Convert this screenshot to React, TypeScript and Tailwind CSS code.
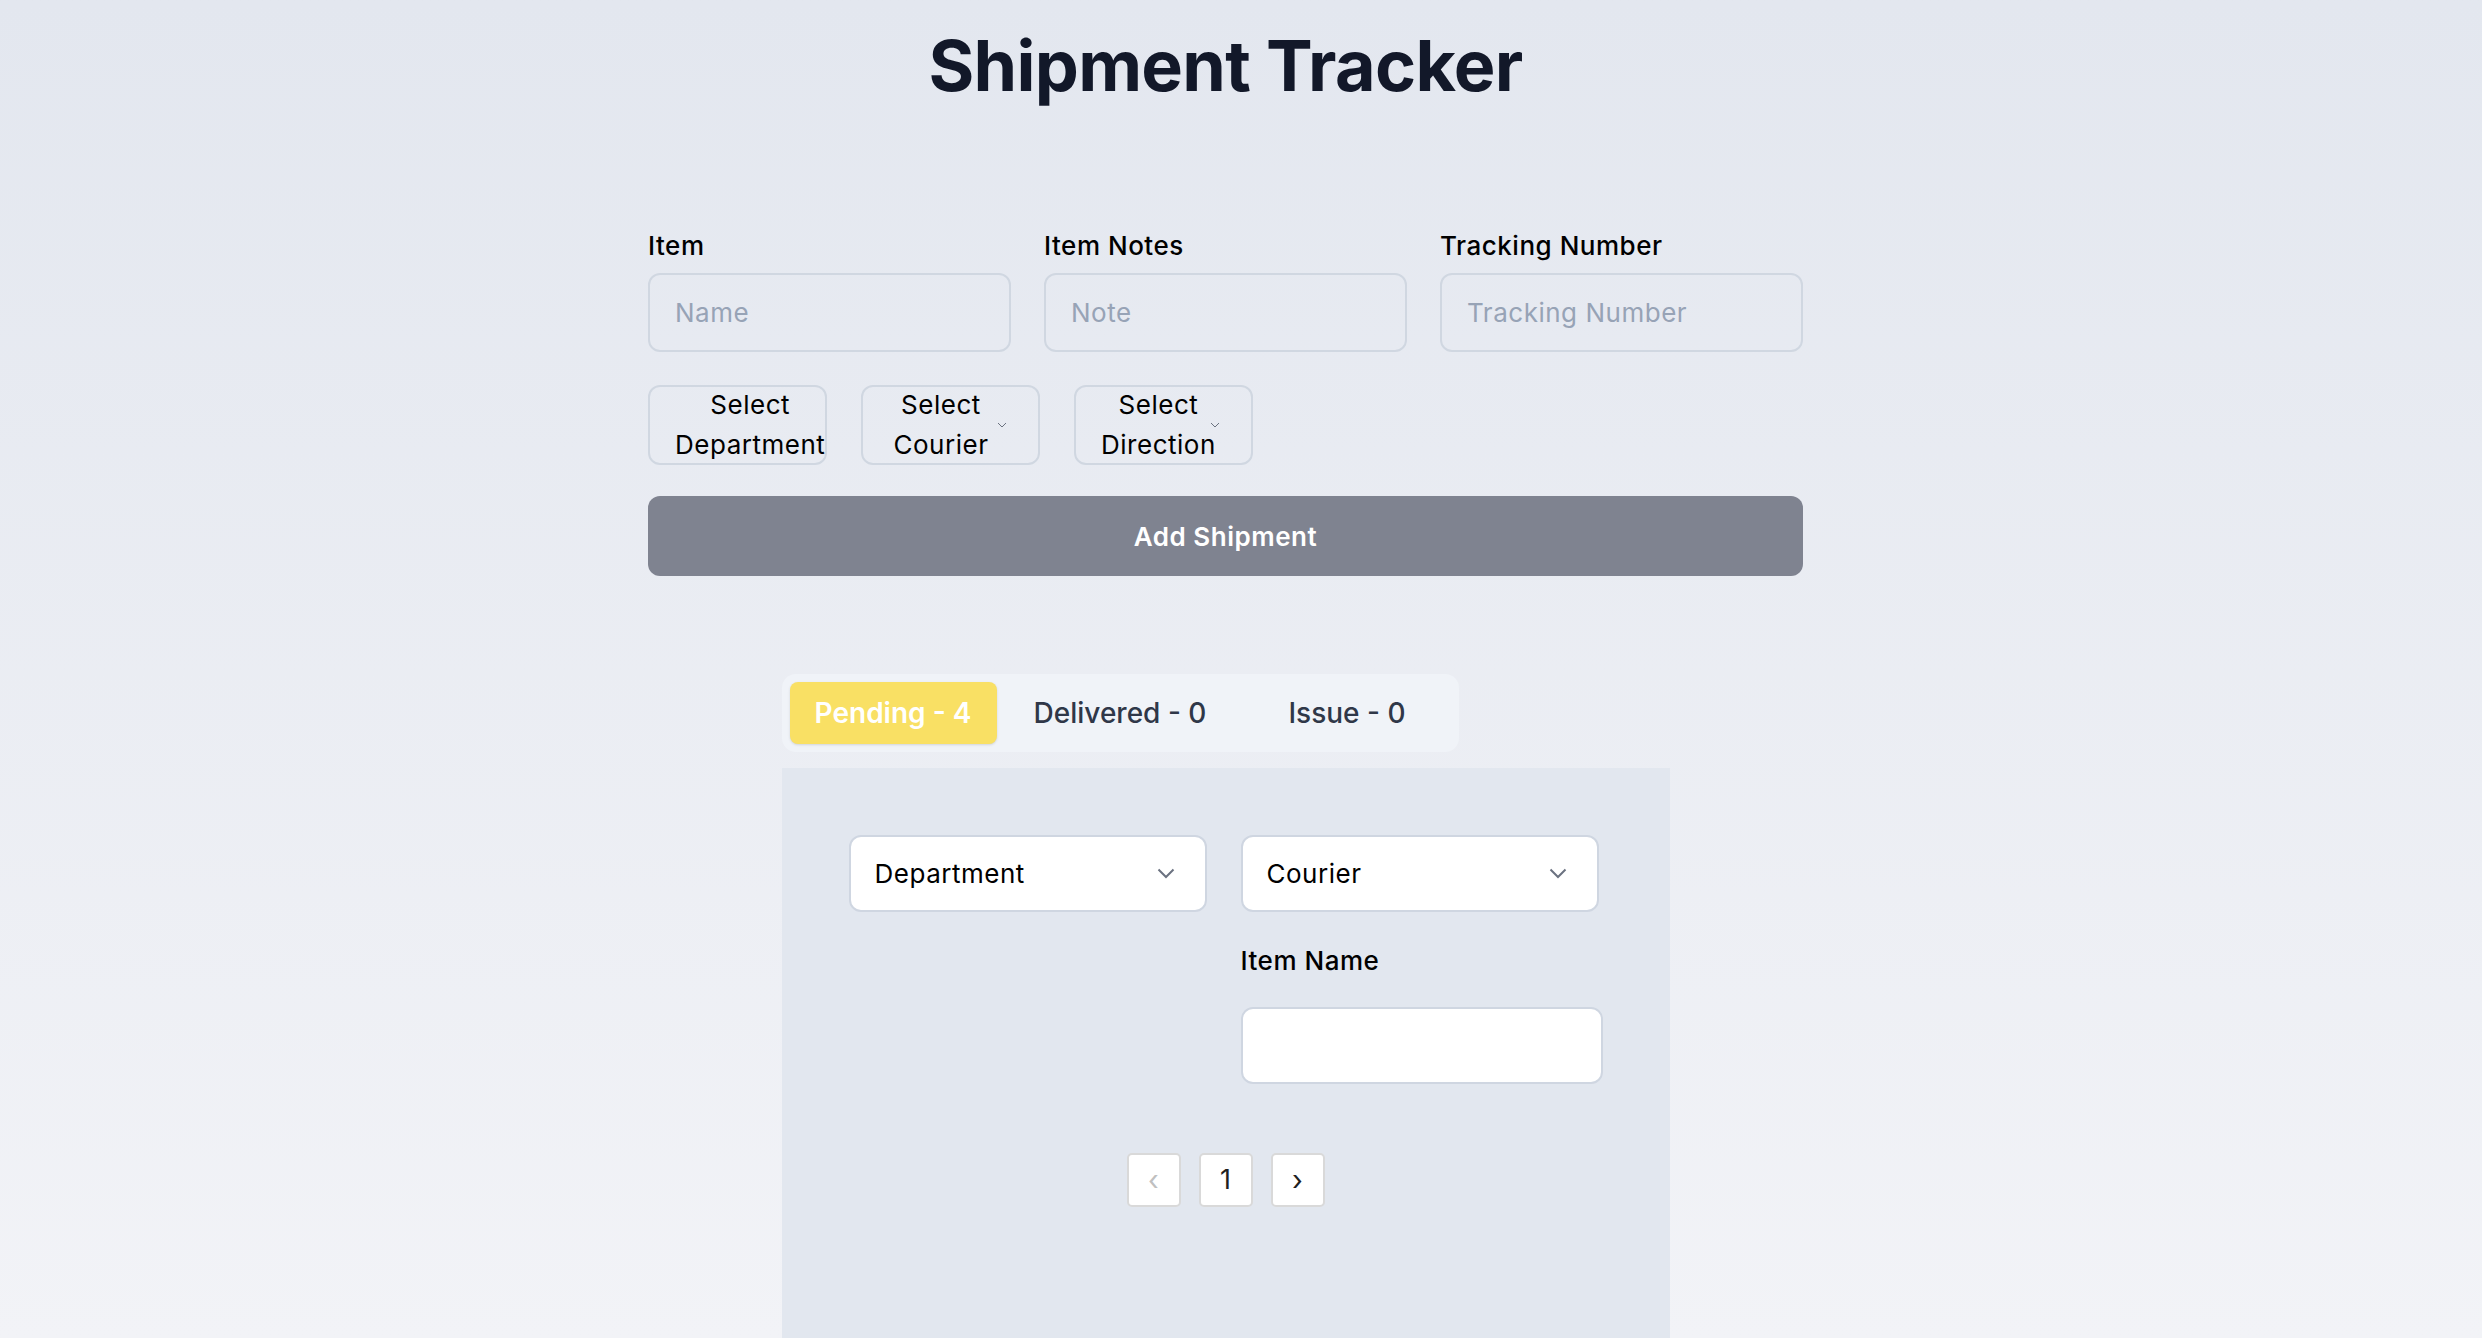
import { useState } from 'react';

const tabs = [
  { key: 'pending', label: 'Pending', count: 4 },
  { key: 'delivered', label: 'Delivered', count: 0 },
  { key: 'issue', label: 'Issue', count: 0 },
];

function TinyChevron() {
  return (
    <svg width="10" height="6" viewBox="0 0 10 6" fill="none" className="absolute right-[31px] top-1/2 -translate-y-1/2">
      <path d="M1 1l4 4 4-4" stroke="#6b7280" strokeWidth="1" />
    </svg>
  );
}

function FormSelect({ label, chevron = true }: { label: string; chevron?: boolean }) {
  return (
    <button
      type="button"
      className="relative flex h-[80px] w-[179px] items-center overflow-visible rounded-[12px] border-2 border-[#d0d7e1] pl-[25px] pr-[44px] text-[26px] leading-[40px] tracking-[0.02em] text-black"
    >
      <span className="inline-block min-w-full shrink-0 whitespace-nowrap text-center">
        Select
        <br />
        {label}
      </span>
      {chevron && <TinyChevron />}
    </button>
  );
}

function FilterSelect({ label }: { label: string }) {
  return (
    <div className="flex h-[77px] w-[358px] items-center justify-between rounded-[12px] border-2 border-[#cfd6e1] bg-white pl-[24px] pr-[30px] text-[26px] tracking-[0.02em] text-black">
      <span>{label}</span>
      <svg width="18" height="11" viewBox="0 0 18 11" fill="none">
        <path d="M1.5 1.5l7.5 7.5 7.5-7.5" stroke="#6b7280" strokeWidth="2" />
      </svg>
    </div>
  );
}

export default function App() {
  const [active, setActive] = useState('pending');

  return (
    <div className="flex min-h-screen flex-col bg-gradient-to-b from-[#e3e7ef] to-[#f2f3f7] pr-[31px] font-['Inter',sans-serif]">
      <h1 className="pt-[22px] text-center text-[70px] font-bold leading-[88px] tracking-[-0.01em] text-[#121829]">
        Shipment Tracker
      </h1>

      <form className="mx-auto mt-[117px] w-[1155px]" onSubmit={(e) => e.preventDefault()}>
        <div className="grid grid-cols-3 gap-[33px]">
          {[
            ['Item', 'Name'],
            ['Item Notes', 'Note'],
            ['Tracking Number', 'Tracking Number'],
          ].map(([label, ph]) => (
            <label key={label} className="flex flex-col">
              <span className="text-[26px] font-medium leading-[38px] tracking-[0.02em] text-black">{label}</span>
              <input
                placeholder={ph}
                className="mt-[8px] h-[79px] rounded-[12px] border-2 border-[#d0d7e1] bg-transparent px-[25px] text-[26px] tracking-[0.02em] text-black outline-none placeholder:text-[#97a3b6]"
              />
            </label>
          ))}
        </div>

        <div className="mt-[33px] flex gap-[34px]">
          <FormSelect label="Department" chevron={false} />
          <FormSelect label="Courier" />
          <FormSelect label="Direction" />
        </div>

        <button
          type="submit"
          className="mt-[31px] h-[80px] w-full rounded-[12px] bg-[#7f8390] text-[26px] font-semibold tracking-[0.02em] text-white"
        >
          Add Shipment
        </button>
      </form>

      <section className="mx-auto mt-[98px] flex w-[888px] flex-1 flex-col">
        <div className="grid w-fit grid-cols-3 gap-[20px] rounded-[14px] bg-[#f0f3f8] p-[8px]">
          {tabs.map((t) => (
            <button
              key={t.key}
              type="button"
              onClick={() => setActive(t.key)}
              className={
                active === t.key
                  ? 'h-[62px] w-[207px] rounded-[8px] bg-[#f9e064] text-[28px] font-semibold text-white shadow-sm'
                  : 'h-[62px] w-[207px] rounded-[8px] text-[28px] font-medium text-[#2f3748]'
              }
            >
              {t.label} - {t.count}
            </button>
          ))}
        </div>

        <div className="mt-[16px] flex-1 bg-[#e2e7ef] px-[67px] pt-[67px] pb-[40px]">
          <div className="grid grid-cols-[358px_1fr] gap-x-[34px]">
            <FilterSelect label="Department" />
            <FilterSelect label="Courier" />
            <div className="col-start-2 mt-[30px] flex flex-col">
              <span className="text-[26px] font-medium leading-[38px] tracking-[0.02em] text-black">Item Name</span>
              <input className="mt-[27px] h-[77px] w-[362px] rounded-[12px] border-2 border-[#cfd6e1] bg-white px-[24px] text-[26px] outline-none" />
            </div>
          </div>

          <div className="mt-[69px] flex justify-center gap-[18px]">
            <button type="button" className="flex h-[54px] w-[54px] items-center justify-center rounded-[5px] border-2 border-[#d9d9d9] bg-white text-[28px] text-[#c0c0c0]">
              ‹
            </button>
            <button type="button" className="flex h-[54px] w-[54px] items-center justify-center rounded-[5px] border-2 border-[#d9d9d9] bg-white text-[27px] text-[#1f1f1f]">
              1
            </button>
            <button type="button" className="flex h-[54px] w-[54px] items-center justify-center rounded-[5px] border-2 border-[#d9d9d9] bg-white text-[28px] text-[#1f1f1f]">
              ›
            </button>
          </div>
        </div>
      </section>
    </div>
  );
}
